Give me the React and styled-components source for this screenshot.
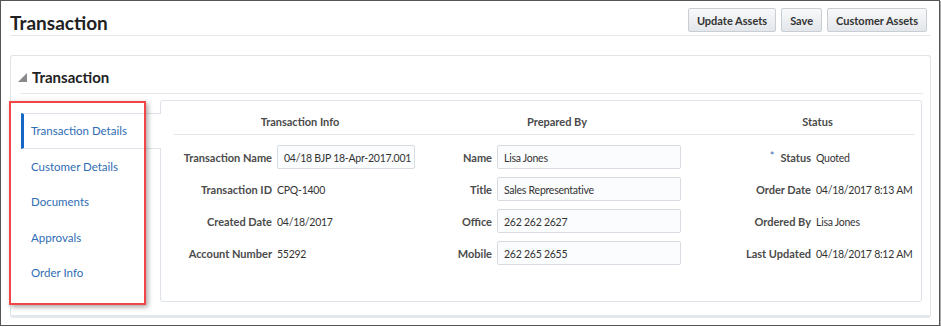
import React from "react";
import styled, { createGlobalStyle } from "styled-components";

const GlobalStyle = createGlobalStyle`
  body {
    margin: 0;
    background: #fff;
    font-family: Lato, "Liberation Sans", sans-serif;
  }
  * { box-sizing: border-box; }
`;

const tabs = ["Transaction Details", "Customer Details", "Documents", "Approvals", "Order Info"];

const columns = [
  {
    title: "Transaction Info",
    width: "252px",
    labelWidth: 98,
    inputWidth: 138,
    headShift: 0,
    rows: [
      { label: "Transaction Name", value: "04/18 BJP 18-Apr-2017.001", input: true },
      { label: "Transaction ID", value: "CPQ-1400" },
      { label: "Created Date", value: "04/18/2017" },
      { label: "Account Number", value: "55292" },
    ],
  },
  {
    title: "Prepared By",
    width: "262px",
    labelWidth: 66,
    inputWidth: 184,
    headShift: 0,
    rows: [
      { label: "Name", value: "Lisa Jones", input: true },
      { label: "Title", value: "Sales Representative", input: true },
      { label: "Office", value: "262 262 2627", input: true },
      { label: "Mobile", value: "262 265 2655", input: true },
    ],
  },
  {
    title: "Status",
    width: "1fr",
    labelWidth: 123,
    headShift: 32,
    rows: [
      { label: "Status", value: "Quoted", required: true },
      { label: "Order Date", value: "04/18/2017 8:13 AM" },
      { label: "Ordered By", value: "Lisa Jones" },
      { label: "Last Updated", value: "04/18/2017 8:12 AM" },
    ],
  },
];

const App = () => {
  return (
    <>
      <GlobalStyle />
      <Frame>
        <Header>
          <Title>Transaction</Title>
          <Actions>
            <Button>Update Assets</Button>
            <Button>Save</Button>
            <Button>Customer Assets</Button>
          </Actions>
        </Header>

        <Section>
          <SectionHead>
            <svg width="9" height="9" viewBox="0 0 9 9">
              <polygon points="9,0 9,9 0,9" fill="#8a8a8a" />
            </svg>
            <SectionTitle>Transaction</SectionTitle>
          </SectionHead>
          <Rule />

          <Body>
            <TabList>
              {tabs.map((t, i) => (
                <Tab key={t} $active={i === 0}>
                  {t}
                </Tab>
              ))}
            </TabList>

            <Panel>
              <Grid>
                {columns.map((col) => (
                  <Column key={col.title}>
                    <ColHead $shift={col.headShift}>{col.title}</ColHead>
                    <Rows>
                      {col.rows.map((r) => (
                        <Row key={r.label}>
                          <Label $w={col.labelWidth}>
                            {r.required && <Req>*</Req>}
                            {r.label}
                          </Label>
                          {r.input ? (
                            <Input $w={col.inputWidth}>{r.value}</Input>
                          ) : (
                            <Value>{r.value}</Value>
                          )}
                        </Row>
                      ))}
                    </Rows>
                  </Column>
                ))}
              </Grid>
            </Panel>
          </Body>
        </Section>

        <Highlight />
      </Frame>
    </>
  );
};

export default App;

const Frame = styled.div`
  position: relative;
  width: 940px;
  height: 326px;
  border: 1px solid #555;
  box-shadow: 1px 1px 0 #aaa;
  overflow: hidden;
`;

const Header = styled.div`
  display: flex;
  justify-content: space-between;
  align-items: flex-start;
  height: 35px;
  margin: 0 9px 0 9px;
  padding-right: 3px;
  border-bottom: 1px solid #e3e8ed;
`;

const Title = styled.h1`
  margin: 10px 0 0 0;
  font-size: 19px;
  line-height: 24px;
  font-weight: 700;
  color: #222;
`;

const Actions = styled.div`
  display: flex;
  gap: 5px;
  margin-top: 7px;
`;

const Button = styled.button`
  height: 24px;
  padding: 0 8px;
  font-family: Lato, sans-serif;
  font-size: 11px;
  font-weight: 700;
  color: #333;
  background: linear-gradient(#f8f9fa, #e3e6ea);
  border: 1px solid #c9ced4;
  border-radius: 2px;
`;

const Section = styled.div`
  margin: 19px 8px 0 9px;
  height: 263px;
  border: 1px solid #dfe4e9;
  border-bottom: 3px solid #e4e8ec;
  border-radius: 3px;
`;

const SectionHead = styled.div`
  display: flex;
  align-items: center;
  gap: 5px;
  height: 37px;
  padding: 5px 0 0 7px;
`;

const SectionTitle = styled.h2`
  margin: 0;
  font-size: 15px;
  font-weight: 700;
  color: #222;
`;

const Rule = styled.div`
  height: 1px;
  margin: 0 7px 0 9px;
  background: #e3e8ed;
`;

const Body = styled.div`
  display: flex;
  margin: 6px 8px 0 10px;
  height: 202px;
`;

const TabList = styled.div`
  width: 139px;
  padding-top: 13px;
  display: flex;
  flex-direction: column;
`;

const Tab = styled.div`
  position: relative;
  z-index: 1;
  height: 35.5px;
  display: flex;
  align-items: center;
  padding-left: 7px;
  font-size: 11.5px;
  color: #2f6db4;
  margin-right: ${(p) => (p.$active ? "-1px" : "0")};
  background: #fff;
  border-left: 3px solid ${(p) => (p.$active ? "#1467c4" : "transparent")};
  border-top: 1px solid ${(p) => (p.$active ? "#dde3e9" : "transparent")};
  border-bottom: 1px solid ${(p) => (p.$active ? "#dde3e9" : "transparent")};
`;

const Panel = styled.div`
  flex: 1;
  border: 1px solid #dde3e9;
  border-radius: 3px;
  padding: 0 6px 0 13px;
`;

const Grid = styled.div`
  display: grid;
  grid-template-columns: ${columns.map((c) => c.width).join(" ")};
`;

const Column = styled.div`
  display: flex;
  flex-direction: column;
  min-width: 0;
`;

const ColHead = styled.div`
  height: 34px;
  padding: 14px 0 0 ${(p) => p.$shift}px;
  text-align: center;
  font-size: 11px;
  font-weight: 700;
  color: #4a4a4a;
  border-bottom: 1px solid #e3e8ed;
`;

const Rows = styled.div`
  padding-top: 6px;
`;

const Row = styled.div`
  display: flex;
  align-items: center;
  gap: 5px;
  height: 32px;
  white-space: nowrap;
`;

const Label = styled.div`
  width: ${(p) => p.$w}px;
  flex-shrink: 0;
  text-align: right;
  font-size: 11px;
  font-weight: 700;
  color: #4b4b4b;
`;

const Req = styled.span`
  color: #3c6db0;
  font-weight: 400;
  margin-right: 6px;
  position: relative;
  top: -2px;
`;

const Value = styled.div`
  font-size: 10.5px;
  letter-spacing: -0.25px;
  color: #333;
  padding-top: 1px;
`;

const Input = styled.div`
  width: ${(p) => p.$w}px;
  flex-shrink: 0;
  height: 24px;
  display: flex;
  align-items: center;
  padding: 1px 5px 0 6px;
  font-size: 10.5px;
  letter-spacing: -0.25px;
  color: #333;
  background: #fbfcfd;
  border: 1px solid #d6dce2;
  border-radius: 2px;
`;

const Highlight = styled.div`
  position: absolute;
  left: 8px;
  top: 100px;
  width: 137px;
  height: 204px;
  border: 2.5px solid #f24646;
  box-shadow: 2px 2px 5px rgba(0, 0, 0, 0.35);
  z-index: 2;
`;
